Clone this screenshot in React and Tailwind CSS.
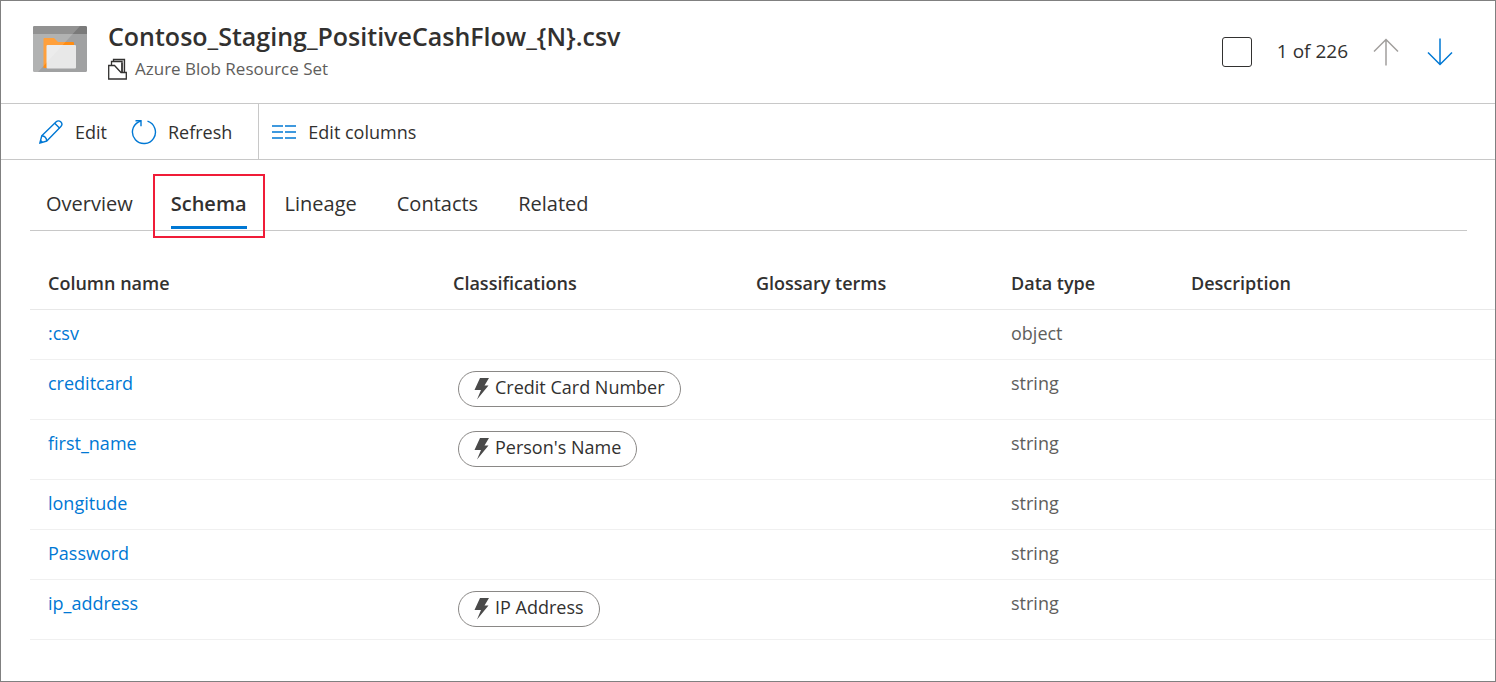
const tabs = ["Overview", "Schema", "Lineage", "Contacts", "Related"];

const rows = [
  { name: ":csv", type: "object" },
  { name: "creditcard", tag: "Credit Card Number", type: "string" },
  { name: "first_name", tag: "Person's Name", type: "string" },
  { name: "longitude", type: "string" },
  { name: "Password", type: "string" },
  { name: "ip_address", tag: "IP Address", type: "string" },
];

const headings = ["Column name", "Classifications", "Glossary terms", "Data type", "Description"];

function FolderTile() {
  return (
    <svg width="54" height="46" viewBox="0 0 54 46" aria-hidden="true">
      <rect width="54" height="46" rx="1.500" fill="#a0a1a2" />
      <path d="M0 8V1.500A1.500 1.500 0 0 1 1.500 0h51A1.500 1.500 0 0 1 54 1.500V8z" fill="#7a7a7a" />
      <path d="M10.500 42V13a1 1 0 0 1 1-1H21l4 4h15a1 1 0 0 1 1 1v25z" fill="#ff8c12" />
      <rect x="13.500" y="19" width="29.500" height="23.500" rx="1" fill="#e8e8e8" />
      <path d="M0 1.500A1.500 1.500 0 0 1 1.500 0H47L5 46H1.500A1.500 1.500 0 0 1 0 44.500z" fill="#fff" fillOpacity="0.18" />
    </svg>
  );
}

function ResourceSetIcon() {
  return (
    <svg width="19" height="22" viewBox="0 0 19 22" fill="#dcdcdc" stroke="#323130" strokeWidth="1.300" aria-hidden="true">
      <path d="M5.500 1.500h11v15h-11z" />
      <path d="M3.500 3.500H14v12H3.500z" fill="#fff" />
      <path d="M.7 21V7.500h5.800l6.500 7h5.300V21z" fill="#fff" />
      <path d="M14 5v9.500" />
    </svg>
  );
}

function ArrowUp() {
  return (
    <svg width="26" height="28" viewBox="0 0 26 28" fill="none" stroke="currentColor" strokeWidth="1.500" aria-hidden="true">
      <path d="M13 27.500V1.500M1 13.500l12-12 12 12" />
    </svg>
  );
}

function ArrowDown() {
  return (
    <svg width="26" height="28" viewBox="0 0 26 28" fill="none" stroke="currentColor" strokeWidth="1.500" aria-hidden="true">
      <path d="M13 .5v26M1 14.500l12 12 12-12" />
    </svg>
  );
}

function PencilIcon() {
  return (
    <svg width="24" height="24" viewBox="0 0 24 24" fill="none" stroke="#0078d4" strokeWidth="1.400" strokeLinejoin="round" aria-hidden="true">
      <path d="M.8 23.200l2-7.500L17.200 1.800c1.300-1.300 3.200-1.300 4.500 0s1.500 3.400.2 4.700L7.800 21z" />
      <path d="M2.800 15.700c2.600.2 4.700 2.500 5 5.300M15.700 3.200l5 5M1.600 20.500l2 2" />
    </svg>
  );
}

function RefreshIcon() {
  return (
    <svg width="26" height="26" viewBox="0 0 26 26" fill="none" stroke="#0078d4" strokeWidth="1.400" aria-hidden="true">
      <path d="M16.500 2.100a11.500 11.500 0 1 1-8.800.7L10 2" />
      <path d="M4.500 1.700H10v5.500" />
    </svg>
  );
}

function ColumnsIcon() {
  return (
    <svg width="24" height="14" viewBox="0 0 24 14" fill="none" stroke="#0078d4" strokeWidth="1.400" aria-hidden="true">
      <path d="M0 1h11M13 1h11M0 7h11M13 7h11M0 13h11M13 13h11" />
    </svg>
  );
}

function Bolt() {
  return (
    <svg width="16" height="22" viewBox="0 0 16 22" fill="#4a4a4a" aria-hidden="true">
      <path d="M6 0h9l-4.500 7.500h4L3 21.500l4-9.500H.5z" />
    </svg>
  );
}

export default function App() {
  return (
    <main className="flex min-h-screen flex-col border border-[#808080] bg-white font-['Open_Sans','Noto_Sans',sans-serif] text-lg text-[#323130]">
      <header className="flex items-center justify-between border-b border-[#c8c8c8] pr-[42px] pl-8">
        <div className="flex items-start gap-[21px] py-[19px]">
          <div className="pt-1.5">
            <FolderTile />
          </div>
          <div>
            <h1 className="text-[25px] leading-8 font-semibold">Contoso_Staging_PositiveCashFlow_&#123;N&#125;.csv</h1>
            <p className="mt-0.5 flex items-center gap-2 text-[17px] leading-[30px] text-[#605e5c]">
              <ResourceSetIcon />
              Azure Blob Resource Set
            </p>
          </div>
        </div>
        <div className="flex items-center gap-[25px]">
          <input
            type="checkbox"
            aria-label="Select asset"
            className="size-[30px] appearance-none rounded-[3px] border border-[#323130] bg-white"
          />
          <span className="text-[19px]">1 of 226</span>
          <div className="flex gap-7">
            <button type="button" aria-label="Previous" className="text-[#a19f9d]">
              <ArrowUp />
            </button>
            <button type="button" aria-label="Next" className="text-[#0078d4]">
              <ArrowDown />
            </button>
          </div>
        </div>
      </header>

      <div className="flex h-14 items-stretch border-b border-[#c8c8c8] pl-[38px]">
        <button type="button" className="flex items-center gap-3 pr-6">
          <PencilIcon />
          Edit
        </button>
        <button type="button" className="flex items-center gap-[11px] pr-[26px]">
          <RefreshIcon />
          Refresh
        </button>
        <button type="button" className="flex items-center gap-3 border-l border-[#c8c8c8] px-[13px]">
          <ColumnsIcon />
          Edit columns
        </button>
      </div>

      <nav className="mr-7 ml-[29px] flex gap-2 border-b border-[#c8c8c8] pt-3.5 text-xl">
        {tabs.map((tab) =>
          tab === "Schema" ? (
            <a
              key={tab}
              href="#schema"
              aria-current="page"
              className="-mx-1 -mb-2 border-2 border-[#f01c38] px-4 pt-3.5 pb-[7px] font-semibold"
            >
              <span className="block border-b-[3px] border-[#0078d4] pb-2">{tab}</span>
            </a>
          ) : (
            <a key={tab} href={`#${tab.toLowerCase()}`} className="px-4 pt-4 pb-3">
              {tab}
            </a>
          )
        )}
      </nav>

      <table className="mt-[26px] ml-[29px] table-fixed border-collapse text-left">
        <colgroup>
          <col className="w-[405px]" />
          <col className="w-[303px]" />
          <col className="w-[255px]" />
          <col className="w-[180px]" />
          <col />
        </colgroup>
        <thead>
          <tr className="h-[52px] border-b border-[#e8e8e8]">
            {headings.map((heading) => (
              <th key={heading} className="pl-[18px] font-semibold">
                {heading}
              </th>
            ))}
          </tr>
        </thead>
        <tbody className="leading-[27px]">
          {rows.map((row) => (
            <tr key={row.name} className="border-b border-[#f0f0f0]">
              <td className="pt-2.5 pb-3 pl-[18px] align-top">
                <a href={`#${row.name}`} className="text-[#0078d4]">
                  {row.name}
                </a>
              </td>
              <td className="pl-[23px] align-top">
                {row.tag && (
                  <span className="mt-[11px] mb-3 inline-flex h-9 items-center gap-[5px] rounded-full border border-[#8a8886] px-[15px] align-top">
                    <Bolt />
                    <span className="pb-0.5">{row.tag}</span>
                  </span>
                )}
              </td>
              <td />
              <td className="pt-2.5 pb-3 pl-[18px] align-top text-[#605e5c]">{row.type}</td>
              <td />
            </tr>
          ))}
        </tbody>
      </table>
    </main>
  );
}
